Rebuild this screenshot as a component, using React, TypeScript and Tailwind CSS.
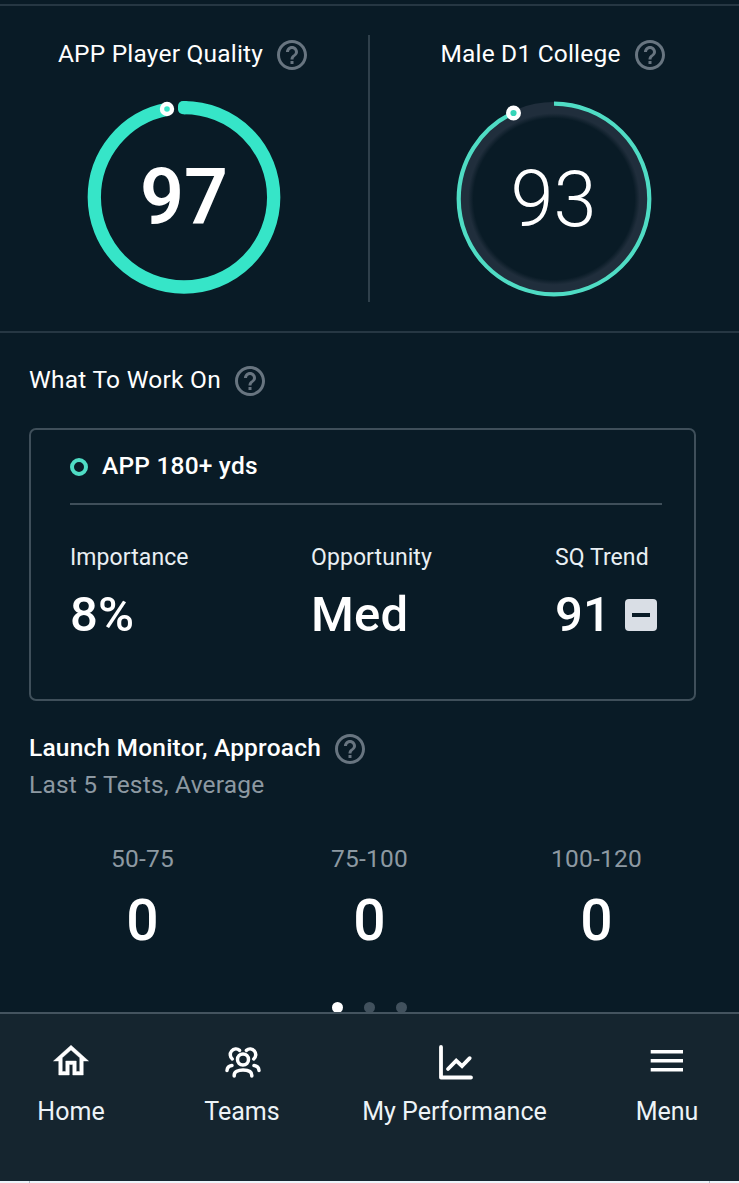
import type { ReactNode } from "react";
import { MdHelpOutline } from "react-icons/md";

function Help() {
  return <MdHelpOutline className="mt-px ml-[11px] size-9 shrink-0 text-[#687580]" />;
}

function HomeIcon() {
  return (
    <svg viewBox="0 0 24 24" className="size-[42px]" fill="currentColor" stroke="currentColor" strokeWidth="0.25">
      <path d="M12 5.690l5 4.500V18h-2v-6H9v6H7v-7.810l5-4.500M12 3L2 12h3v8h6v-6h2v6h6v-8h3L12 3z" />
    </svg>
  );
}

function TeamsIcon() {
  return (
    <svg viewBox="0 0 42 42" className="ml-px size-[42px]" fill="none" stroke="currentColor" strokeWidth="3.5" strokeLinecap="round">
      <circle cx="21" cy="19.500" r="5.500" />
      <path d="M12.200 36v-.8c0-3.600 3.900-5.300 8.800-5.300s8.800 1.700 8.800 5.300v.8" />
      <path d="M10.300 19A5.500 5.500 0 1 1 17.600 10.300" />
      <path d="M31.700 19A5.500 5.500 0 1 0 24.400 10.300" />
      <path d="M5 30.500c.2-2.800 2-4.600 5-5" />
      <path d="M37 30.500c-.2-2.800-2-4.600-5-5" />
    </svg>
  );
}

function ChartIcon() {
  return (
    <svg viewBox="0 0 42 42" className="ml-[3px] size-[42px]" fill="none" stroke="currentColor" strokeWidth="3.8" strokeLinecap="round" strokeLinejoin="round">
      <path d="M6 7V37.500H36" />
      <path d="M13 29l8.200-8.300 5.800 5.300 7.700-7.800" strokeLinejoin="miter" />
    </svg>
  );
}

function MenuIcon() {
  return (
    <svg viewBox="0 0 42 42" className="size-[42px]" fill="currentColor">
      <path d="M4.700 10h32.300v3.600H4.700zM4.700 19h32.300v3.600H4.700zM4.700 28h32.300v3.600H4.700z" />
    </svg>
  );
}

function GaugeTitle({ children }: { children: string }) {
  return (
    <div className="flex h-9 items-center text-[24.5px] leading-8">
      <span className="tracking-[0.2px]">{children}</span>
      <Help />
    </div>
  );
}

function Stat({ label, children, className }: { label: string; children: ReactNode; className: string }) {
  return (
    <div className={className}>
      <div className="text-[23px] leading-8 tracking-[0.08px] text-[#e9eff3]">{label}</div>
      <div className="mt-[25px] flex h-8 items-center text-[49px] leading-8 font-medium tracking-[0.2px]">{children}</div>
    </div>
  );
}

function Distance({ label, value }: { label: string; value: string }) {
  return (
    <div className="flex flex-1 flex-col items-center">
      <div className="text-[24.5px] leading-8 tracking-[0.2px] text-[#8d99a2]">{label}</div>
      <div className="mt-[14px] text-[57px] leading-[64px] font-medium">{value}</div>
    </div>
  );
}

function NavItem({ label, icon, className }: { label: string; icon: ReactNode; className: string }) {
  return (
    <div className={`flex shrink-0 flex-col items-center ${className}`}>
      {icon}
      <span className="mt-[14px] text-[25px] leading-8 whitespace-nowrap text-[#edf3f7]">{label}</span>
    </div>
  );
}

export default function App() {
  return (
    <div className="flex h-[1183px] w-[739px] flex-col overflow-hidden bg-[#091b26] font-['Roboto',sans-serif] text-white">
      <section className="mt-1 flex h-[329px] shrink-0 border-y-2 border-[#263743] pt-[29px]">
        <div className="flex w-[368px] flex-col items-center pt-px">
          <GaugeTitle>APP Player Quality</GaugeTitle>
          <div className="relative mt-6 size-[202px]">
            <svg viewBox="0 0 202 202" className="size-full">
              <circle cx="101" cy="101.300" r="89.700" fill="none" stroke="#36e5c8" strokeWidth="13.300" pathLength="100" strokeDasharray="97 3" transform="rotate(-90 101 101.300)" />
              <rect x="95" y="5" width="12" height="13.300" rx="5" fill="#36e5c8" />
              <circle cx="84" cy="13" r="5" fill="#36e5c8" stroke="#fff" strokeWidth="4.400" />
            </svg>
            <div className="absolute inset-0 flex items-center justify-center pt-[2px] text-[77px] leading-none font-semibold">97</div>
          </div>
        </div>
        <div className="h-[267px] w-0.5 bg-[#2f404b]" />
        <div className="flex w-[368px] flex-col items-center pt-px">
          <GaugeTitle>Male D1 College</GaugeTitle>
          <div className="relative mt-6 size-[206px]">
            <svg viewBox="0 0 206 206" className="size-full">
              <defs>
                <radialGradient id="track" gradientUnits="userSpaceOnUse" cx="103" cy="103" r="97">
                  <stop offset="0.83" stopColor="#202e3c" stopOpacity="0" />
                  <stop offset="0.885" stopColor="#202e3c" />
                </radialGradient>
              </defs>
              <circle cx="103" cy="103" r="97" fill="url(#track)" />
              <circle cx="103" cy="103" r="95.300" fill="none" stroke="#4fdcc4" strokeWidth="4.200" pathLength="100" strokeDasharray="93 7" transform="rotate(-90 103 103)" />
              <circle cx="62.500" cy="17" r="5.300" fill="#36d5b8" stroke="#fff" strokeWidth="4.400" />
            </svg>
            <div className="absolute inset-0 flex items-center justify-center pt-[2px] pr-px text-[77.5px] leading-none font-light">93</div>
          </div>
        </div>
      </section>

      <section className="flex h-[679px] shrink-0 flex-col overflow-hidden px-[29px]">
        <div className="mt-[29px] flex h-9 shrink-0 items-center text-[24.5px] leading-8 tracking-[0.25px]">
          What To Work On
          <Help />
        </div>
        <div className="mt-[30px] h-[273px] w-[667px] shrink-0 rounded-[7px] border-2 border-[#3f4f5a] pr-8 pl-[39px]">
          <div className="flex h-[75px] items-center border-b-2 border-[#3f4f5a]">
            <span className="mt-px size-[18px] rounded-full border-[4px] border-[#4fdcc4]" />
            <span className="-mt-[2px] ml-[14px] text-[24.5px] leading-8 font-medium tracking-[0.2px]">APP 180+ yds</span>
          </div>
          <div className="mt-[37px] flex">
            <Stat label="Importance" className="w-[241px]">8%</Stat>
            <Stat label="Opportunity" className="w-[244px]">Med</Stat>
            <Stat label="SQ Trend" className="whitespace-nowrap">
              91
              <span className="-mt-px ml-[14px] flex size-8 items-center justify-center rounded bg-[#d9dee5]">
                <span className="h-1 w-[18px] bg-[#091b26]" />
              </span>
            </Stat>
          </div>
        </div>
        <div className="mt-[29px] flex h-9 shrink-0 items-center text-[24.5px] leading-8 font-medium tracking-[0.2px]">
          Launch Monitor, Approach
          <Help />
        </div>
        <div className="mt-[3px] text-[24.5px] leading-8 tracking-[0.2px] text-[#8d99a2]">Last 5 Tests, Average</div>
        <div className="mt-[42px] flex w-[681px] shrink-0">
          <Distance label="50-75" value="0" />
          <Distance label="75-100" value="0" />
          <Distance label="100-120" value="0" />
        </div>
        <div className="mt-[49px] flex shrink-0 justify-center gap-[21px]">
          <span className="size-[11px] rounded-full bg-white" />
          <span className="size-[11px] rounded-full bg-[#41515d]" />
          <span className="size-[11px] rounded-full bg-[#41515d]" />
        </div>
      </section>

      <nav className="flex h-[169px] shrink-0 border-t-2 border-[#44545f] bg-[#15252f] pt-[26px]">
        <NavItem label="Home" icon={<HomeIcon />} className="w-[142px]" />
        <NavItem label="Teams" icon={<TeamsIcon />} className="w-[200px]" />
        <NavItem label="My Performance" icon={<ChartIcon />} className="w-[225px]" />
        <NavItem label="Menu" icon={<MenuIcon />} className="w-[200px]" />
      </nav>
      <div className="flex h-0.5 shrink-0 justify-between bg-[#edf4fa] px-[29px]">
        <span className="w-px bg-[#b5bec6]" />
        <span className="w-px bg-[#b5bec6]" />
      </div>
    </div>
  );
}
